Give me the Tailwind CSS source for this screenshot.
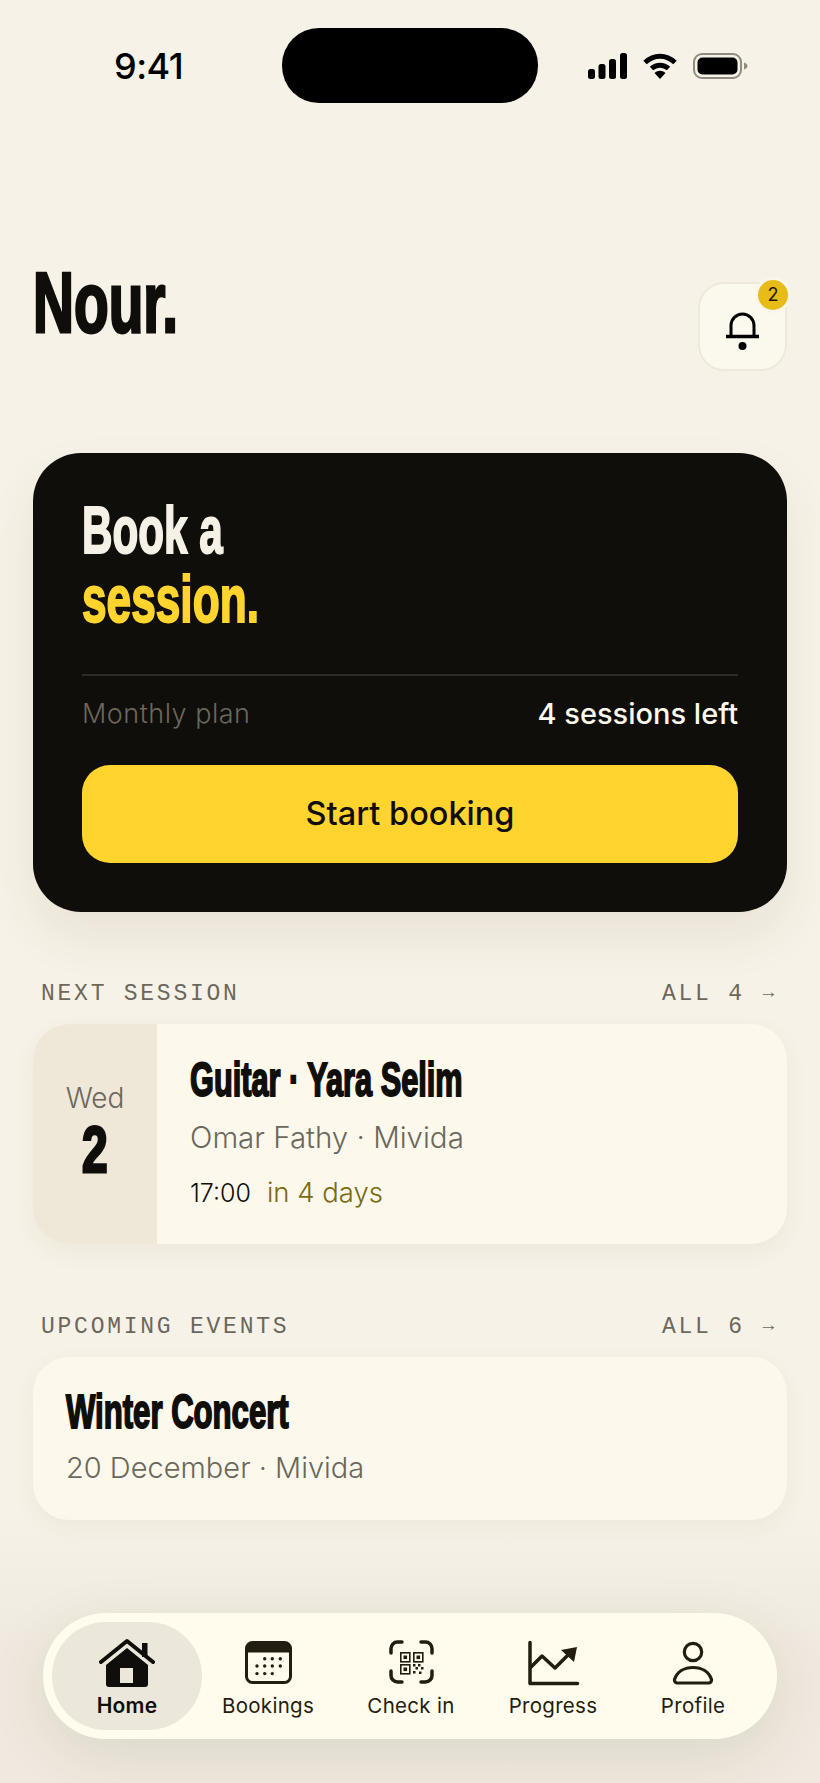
<!DOCTYPE html>
<html lang="en">
<head>
  <meta charset="UTF-8">
  <meta name="viewport" content="width=device-width, initial-scale=1.0">
  <title>Nour - Home</title>
  <script src="https://cdn.jsdelivr.net/npm/@tailwindcss/browser@4"></script>
</head>
<body class="bg-[#f7f2e7] font-['Inter',sans-serif] text-[#0f0e0a]">
  <div class="relative w-[820px] h-[1783px] overflow-hidden">
    <!-- Status bar -->
    <header class="h-[75px] mt-[28px] flex items-center pl-[114px]">
      <span class="w-[168px] text-[36px] leading-none font-medium tracking-[-0.5px] text-black">9:41</span>
      <div class="w-[256px] h-[75px] rounded-[37px] bg-black"></div>
      <div class="ml-[50px] flex items-center gap-[16px]">
        <svg width="39" height="26" viewBox="0 0 39 26" fill="#000">
          <rect x="0" y="16" width="7" height="10" rx="2.5"/>
          <rect x="10.5" y="11" width="7" height="15" rx="2.5"/>
          <rect x="21" y="6" width="7" height="20" rx="2.5"/>
          <rect x="32" y="0" width="7" height="26" rx="2.5"/>
        </svg>
        <svg width="34" height="26" viewBox="0 0 34 26" fill="none" stroke="#000">
          <path d="M2 9.5C11 1 23 1 32 9.5" stroke-width="5"/>
          <path d="M8.5 15.5C13.5 11 20.5 11 25.5 15.5" stroke-width="5"/>
          <path d="M11.5 20L17 26L22.500 20C19 17 15 17 11.500 20Z" fill="#000" stroke="none"/>
        </svg>
        <svg width="55" height="26" viewBox="0 0 55 26">
          <rect x="1" y="1" width="47" height="24" rx="8" fill="none" stroke="#8f8b80" stroke-width="2"/>
          <rect x="4.500" y="4.500" width="40" height="17" rx="5" fill="#000"/>
          <path d="M51 9.500C53.500 10.500 54.500 11.500 54.500 13S53.500 15.500 51 16.500Z" fill="#8f8b80"/>
        </svg>
      </div>
    </header>

    <main class="relative px-[33px]">
      <!-- Greeting -->
      <section class="mt-[179px] h-[89px] flex items-start justify-between">
        <h1 class="w-[224px] mt-[-30px] text-[86px] leading-[100px] font-bold font-['Liberation_Sans',sans-serif] origin-left scale-x-[0.66] [-webkit-text-stroke:3px_#0f0e0a]">Nour.</h1>
        <button class="relative w-[89px] h-[89px] ml-auto rounded-[26px] bg-[#fbf8ee] border-2 border-[#eee9dc] flex items-center justify-center">
          <svg class="mt-[9px]" width="33" height="38" viewBox="0 0 33 38" fill="none" stroke="#000">
            <path d="M5 24V13.500a11.500 11.500 0 0 1 23 0V24" stroke-width="3"/>
            <path d="M0 24.500H33" stroke-width="3.500"/>
            <circle cx="16.500" cy="34" r="4" fill="#000" stroke="none"/>
          </svg>
          <span class="absolute top-[-4px] right-[-3px] w-[30px] h-[30px] rounded-full bg-[#e8bc16] ring-[3px] ring-[#f9f5ea] flex items-center justify-center text-[18px] leading-none text-[#1a1608]">2</span>
        </button>
      </section>

      <!-- Booking card -->
      <section class="mt-[82px] h-[459px] rounded-[48px] bg-[#0f0e0a] px-[49px] pt-[43px] shadow-[0_24px_50px_rgba(60,50,20,0.08)]">
        <h2 class="font-bold font-['Liberation_Sans',sans-serif] text-[66px] leading-[69px] [-webkit-text-stroke:2px_currentColor]">
          <span class="block origin-left scale-x-[0.64] text-[#f6f1e6] whitespace-nowrap">Book a</span>
          <span class="block origin-left scale-x-[0.67] text-[#ffd42e] whitespace-nowrap">session.</span>
        </h2>
        <div class="mt-[40px] border-t-2 border-[#2c2b27] pt-[19px] flex items-center justify-between">
          <span class="text-[27px] leading-[38px] font-light tracking-[0.5px] text-[#6b675c]">Monthly plan</span>
          <span class="text-[29px] leading-[38px] font-medium text-[#fbf8ee]">4 sessions left</span>
        </div>
        <button class="mt-[32px] w-full h-[98px] rounded-[28px] bg-[#ffd42e] text-[32.500px] font-medium text-[#0f0e0a]">Start booking</button>
      </section>

      <!-- Next session -->
      <div class="mt-[70px] px-[8px] h-[24px] flex items-center justify-between font-['Liberation_Mono',monospace] text-[23px] tracking-[2.75px] text-[#6b675c]">
        <span>NEXT SESSION</span>
        <span>ALL 4 <span class="inline-block ml-[1.500px] mr-[2px] text-[19px] -translate-y-[2px]">→</span></span>
      </div>
      <article class="mt-[18px] h-[220px] rounded-[36px] bg-[#fcf8ec] overflow-hidden flex shadow-[0_8px_24px_rgba(60,50,20,0.05)]">
        <div class="w-[124px] bg-[#efe8d8] flex flex-col items-center pt-[59px]">
          <span class="text-[28px] leading-[30px] font-light text-[#6b675c]">Wed</span>
          <span class="mt-[5px] text-[64px] leading-[64px] font-bold font-['Liberation_Sans',sans-serif] scale-x-[0.72] [-webkit-text-stroke:3px_#0f0e0a]">2</span>
        </div>
        <div class="pl-[33px] pt-[32px]">
          <h3 class="text-[48px] leading-[48px] font-bold font-['Liberation_Sans',sans-serif] origin-left scale-x-[0.64] whitespace-nowrap [-webkit-text-stroke:2px_#0f0e0a]">Guitar · Yara Selim</h3>
          <p class="mt-[13px] text-[29.500px] leading-[40px] font-light text-[#6b675c]">Omar Fathy · Mivida</p>
          <p class="mt-[16px] leading-[38px] font-light flex items-baseline gap-[16px]">
            <span class="text-[25px]">17:00</span>
            <span class="text-[27.500px] text-[#7a6a10]">in 4 days</span>
          </p>
        </div>
      </article>

      <!-- Upcoming events -->
      <div class="mt-[71px] px-[8px] h-[24px] flex items-center justify-between font-['Liberation_Mono',monospace] text-[23px] tracking-[2.75px] text-[#6b675c]">
        <span>UPCOMING EVENTS</span>
        <span>ALL 6 <span class="inline-block ml-[1.500px] mr-[2px] text-[19px] -translate-y-[2px]">→</span></span>
      </div>
      <article class="mt-[18px] h-[163px] rounded-[36px] bg-[#fcf8ec] px-[33px] pt-[31px] shadow-[0_8px_24px_rgba(60,50,20,0.05)]">
        <h3 class="text-[48px] leading-[48px] font-bold font-['Liberation_Sans',sans-serif] origin-left scale-x-[0.648] whitespace-nowrap [-webkit-text-stroke:2px_#0f0e0a]">Winter Concert</h3>
        <p class="mt-[12px] text-[29px] leading-[40px] font-light text-[#6b675c]">20 December · Mivida</p>
      </article>
    </main>

    <!-- Tint behind the tab bar -->
    <div class="absolute left-0 bottom-0 w-full h-[270px] bg-linear-to-t from-[#efe9df] via-[#efe9df] to-transparent"></div>

    <!-- Tab bar -->
    <nav class="absolute left-[43px] top-[1613px] w-[734px] h-[126px] rounded-[63px] bg-[#fffcee] p-[9px] flex shadow-[0_16px_60px_rgba(70,55,20,0.1)]">
      <a class="w-[150px] rounded-[54px] bg-[#ebe7da] flex flex-col items-center">
        <svg class="mt-[16px]" width="56" height="50" viewBox="0 0 56 50">
          <rect x="43" y="5" width="5.500" height="14" fill="#0f0e0a"/>
          <path d="M2 24L28 3L54 24" fill="none" stroke="#0f0e0a" stroke-width="4" stroke-linecap="round" stroke-linejoin="round"/>
          <path d="M7 27L28 10L49 27V46a3 3 0 0 1-3 3H10a3 3 0 0 1-3-3Z" fill="#0f0e0a"/>
          <rect x="21" y="30" width="13" height="15" fill="#ebe7da"/>
        </svg>
        <span class="mt-[5px] text-[21px] leading-[26px] font-semibold tracking-[0.2px]">Home</span>
      </a>
      <a class="w-[132px] flex flex-col items-center">
        <svg class="mt-[19px]" width="47" height="43" viewBox="0 0 47 43">
          <rect x="1.500" y="1.500" width="44" height="40" rx="6" fill="none" stroke="#231c10" stroke-width="3"/>
          <path d="M1.500 11V7a5.500 5.500 0 0 1 5.500-5.500H40a5.500 5.500 0 0 1 5.500 5.500V11Z" fill="#231c10" stroke="#231c10"/>
          <g fill="#231c10">
            <circle cx="19.700" cy="17.700" r="1.700"/><circle cx="27.300" cy="17.700" r="1.700"/><circle cx="35.300" cy="17.700" r="1.700"/>
            <circle cx="12" cy="25" r="1.700"/><circle cx="19.700" cy="25" r="1.700"/><circle cx="27.300" cy="25" r="1.700"/><circle cx="35.300" cy="25" r="1.700"/>
            <circle cx="12" cy="32.600" r="1.700"/><circle cx="19.700" cy="32.600" r="1.700"/><circle cx="27.300" cy="32.600" r="1.700"/>
          </g>
        </svg>
        <span class="mt-[9px] text-[20.500px] leading-[26px] font-normal tracking-[0.3px] text-[#231c10]">Bookings</span>
      </a>
      <a class="w-[154px] flex flex-col items-center">
        <svg class="mt-[18px]" width="45" height="44" viewBox="0 0 45 44">
          <path d="M13 2H8.500a6.500 6.500 0 0 0-6.500 6.500V13M32 2h4.500A6.500 6.500 0 0 1 43 8.500V13M2 31v4.500A6.500 6.500 0 0 0 8.500 42H13M43 31v4.500A6.500 6.500 0 0 1 36.500 42H32" fill="none" stroke="#231c10" stroke-width="3.500" stroke-linecap="round"/>
          <g fill="none" stroke="#231c10" stroke-width="1.600">
            <rect x="11.800" y="12.800" width="9" height="9"/><rect x="24.800" y="12.800" width="9" height="9"/><rect x="11.800" y="24.800" width="9" height="9"/>
          </g>
          <g fill="#231c10">
            <rect x="14.500" y="15.500" width="3.600" height="3.600"/><rect x="27.500" y="15.500" width="3.600" height="3.600"/><rect x="14.500" y="27.500" width="3.600" height="3.600"/>
            <rect x="24" y="24" width="2.500" height="2.500"/><rect x="29" y="24" width="2.500" height="2.500"/><rect x="26.500" y="27" width="2.500" height="2.500"/><rect x="32" y="27" width="2.500" height="2.500"/><rect x="24" y="31" width="2.500" height="2.500"/><rect x="30" y="31.500" width="2.500" height="2.500"/>
          </g>
        </svg>
        <span class="mt-[9px] text-[20.500px] leading-[26px] font-normal tracking-[0.3px] text-[#231c10]">Check in</span>
      </a>
      <a class="w-[130px] flex flex-col items-center">
        <svg class="mt-[18px]" width="53" height="46" viewBox="0 0 53 46">
          <path d="M3 2.500V43.500H50.500" fill="none" stroke="#231c10" stroke-width="3.500" stroke-linecap="round" stroke-linejoin="round"/>
          <path d="M3 28L15 16L28 28L41 15" fill="none" stroke="#231c10" stroke-width="3.500" stroke-linejoin="round"/>
          <path d="M34 10L50 7L47 22Z" fill="#231c10"/>
        </svg>
        <span class="mt-[7px] text-[20.500px] leading-[26px] font-normal tracking-[0.3px] text-[#231c10]">Progress</span>
      </a>
      <a class="w-[150px] flex flex-col items-center">
        <svg class="mt-[18px]" width="44" height="46" viewBox="0 0 44 46">
          <circle cx="22" cy="12" r="8.700" fill="none" stroke="#231c10" stroke-width="3.200"/>
          <path d="M6 43H38a3 3 0 0 0 2.500-3.500C38 32 31 27.500 22 27.500S6 32 3.500 39.500A3 3 0 0 0 6 43Z" fill="none" stroke="#231c10" stroke-width="3.200"/>
        </svg>
        <span class="mt-[7px] text-[20.500px] leading-[26px] font-normal tracking-[0.3px] text-[#231c10]">Profile</span>
      </a>
    </nav>
  </div>
</body>
</html>
